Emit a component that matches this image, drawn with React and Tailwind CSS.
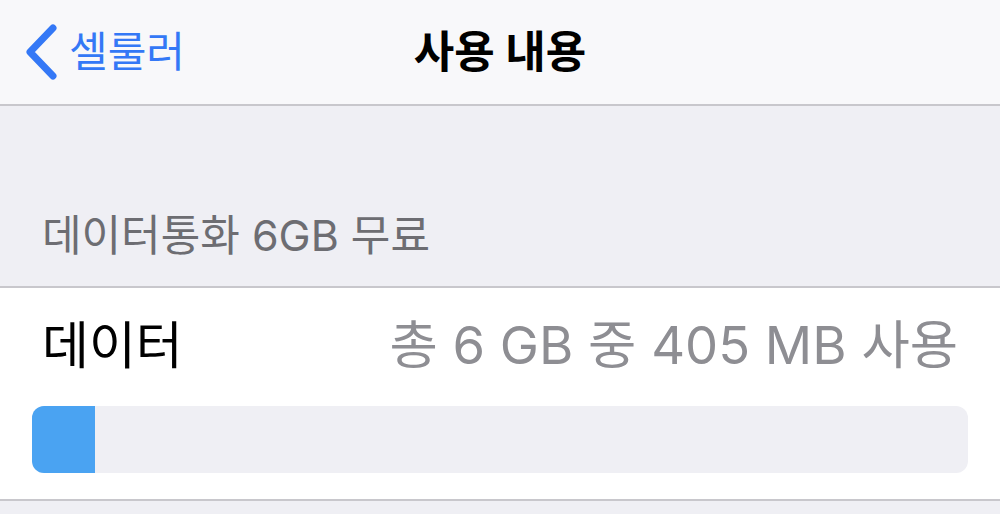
export default function App() {
  const font = { fontFamily: 'Inter, "Noto Sans CJK KR", sans-serif' }
  return (
    <div className="flex h-[514px] w-[1000px] flex-col overflow-hidden bg-[#efeff4]" style={font}>
      <header className="relative flex h-[106px] items-center border-b-2 border-[#c8c7cc] bg-[#f8f8fa]">
        <div className="flex items-center pl-[24px] text-[#3478f6]">
          <svg width="34" height="58" viewBox="0 0 34 58" fill="none">
            <path d="M29 5 L6 29 L29 53" stroke="currentColor" strokeWidth="7" strokeLinecap="round" strokeLinejoin="round" />
          </svg>
          <span className="ml-[11px] text-[42px] leading-none">셀룰러</span>
        </div>
        <h1 className="absolute left-1/2 -translate-x-1/2 text-[44px] font-bold leading-none text-black">사용 내용</h1>
      </header>
      <div className="flex h-[180px] items-end pb-[29px] pl-[42px]">
        <span className="text-[43px] leading-none text-[#6d6d72]">데이터통화 6GB 무료</span>
      </div>
      <section className="border-y-2 border-[#c8c7cc] bg-white px-[32px] pb-[26px] pt-[31px]">
        <div className="flex h-[52px] items-center justify-between px-[10px]">
          <span className="text-[51px] leading-none text-black">데이터</span>
          <span className="text-[52.5px] leading-none text-[#8e8e93]">총 6 GB 중 405 MB 사용</span>
        </div>
        <div className="mt-[35px] flex h-[67px] overflow-hidden rounded-[12px] bg-[#efeff4]">
          <div className="h-full w-[63px] bg-[#4aa3f2]" />
        </div>
      </section>
    </div>
  )
}
